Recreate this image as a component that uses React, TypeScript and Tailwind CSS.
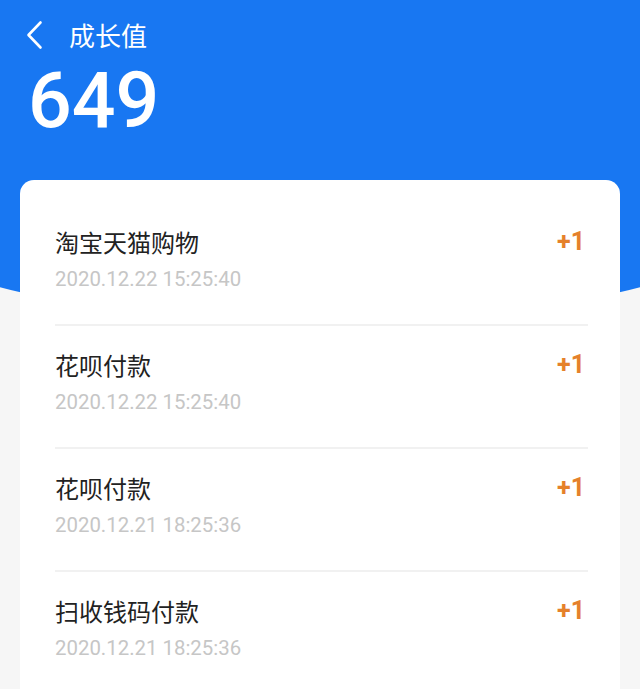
import React from "react";

const items = [
  { title: "淘宝天猫购物", time: "2020.12.22 15:25:40" },
  { title: "花呗付款", time: "2020.12.22 15:25:40" },
  { title: "花呗付款", time: "2020.12.21 18:25:36" },
  { title: "扫收钱码付款", time: "2020.12.21 18:25:36" },
];

export default function App() {
  return (
    <div
      className="relative min-h-screen overflow-hidden bg-[#f6f6f6]"
      style={{ fontFamily: '"Noto Sans CJK SC", Roboto, sans-serif' }}
    >
      <div className="-mx-[320px] h-[326px] rounded-b-[640px_290px] bg-[#1877f2] px-[320px] pt-[20px]">
        <div className="flex h-[30px] items-center pl-[24px]">
          <svg width="20" height="30" viewBox="0 0 20 30" className="shrink-0">
            <path d="M16.5 2.5 L4.5 15 L16.5 27.5" fill="none" stroke="#ffffff" strokeWidth="2.6" strokeLinecap="round" strokeLinejoin="round" />
          </svg>
          <span className="ml-[25px] text-[26px] leading-[30px] text-white">成长值</span>
        </div>
        <div
          className="mt-[11px] pl-[28px] text-[77px] font-medium leading-[80px] text-white"
          style={{ fontFamily: "Roboto, sans-serif" }}
        >
          649
        </div>
      </div>
      <div className="relative mx-[20px] -mt-[146px] rounded-t-[14px] bg-white pl-[35px] pr-[32px] pt-[23px]">
        {items.map((it, i) => (
          <div key={i}>
            <div className="pb-[33px] pt-[24px]">
              <div className="flex items-center justify-between">
                <span className="text-[24px] leading-[30px] text-[#222222]">{it.title}</span>
                <span
                  className="mr-[3px] text-[25px] font-bold leading-[30px] text-[#e5812b]"
                  style={{ fontFamily: "Roboto, sans-serif" }}
                >
                  +1
                </span>
              </div>
              <div
                className="mt-[10px] text-[20.4px] leading-[24px] text-[#c6c6c6]"
                style={{ fontFamily: "Roboto, sans-serif" }}
              >
                {it.time}
              </div>
            </div>
            <div className="h-[2px] bg-[#f1f1f1]" />
          </div>
        ))}
      </div>
    </div>
  );
}
